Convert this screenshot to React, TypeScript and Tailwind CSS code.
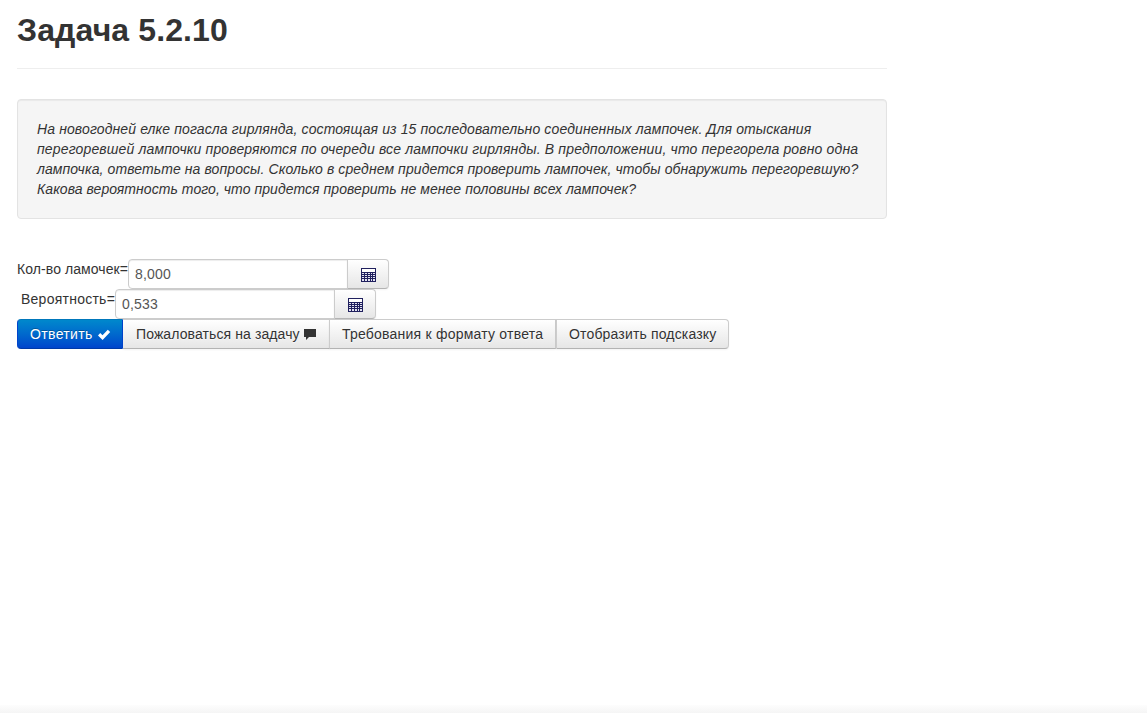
import React from 'react';

const lines = [
  { text: 'На новогодней елке погасла гирлянда, состоящая из 15 последовательно соединенных лампочек. Для отыскания', tracking: 'tracking-[0.118px]' },
  { text: 'перегоревшей лампочки проверяются по очереди все лампочки гирлянды. В предположении, что перегорела ровно одна', tracking: 'tracking-[0.15px]' },
  { text: 'лампочка, ответьте на вопросы. Сколько в среднем придется проверить лампочек, чтобы обнаружить перегоревшую?', tracking: 'tracking-[0.095px]' },
  { text: 'Какова вероятность того, что придется проверить не менее половины всех лампочек?', tracking: 'tracking-[0.06px]' },
];

function CalcIcon() {
  return (
    <svg width="15" height="14" viewBox="0 0 15 14" shapeRendering="crispEdges">
      <rect width="15" height="14" fill="#20205e" />
      <rect x="1" y="1" width="13" height="3" fill="#fff" />
      {[5, 7, 9, 11].map((y) =>
        [1, 4, 7, 10, 12].map((x) => (
          <rect key={`${x}-${y}`} x={x} y={y} width={x === 10 ? 1 : 2} height={y === 11 ? 2 : 1} fill="#e4e4f2" />
        )),
      )}
    </svg>
  );
}

function AnswerRow({ label, value, labelClass }: { label: string; value: string; labelClass: string }) {
  return (
    <div className="flex h-[30px]">
      <label className={`h-5 shrink-0 whitespace-nowrap ${labelClass}`}>{label}</label>
      <input
        defaultValue={value}
        className="h-[30px] w-[220px] rounded-l border border-[#ccc] bg-white px-1.5 py-1 tracking-[0.2px] text-[#555] shadow-[inset_0_1px_1px_rgba(0,0,0,0.075)] outline-none"
      />
      <button className="-ml-px flex h-[30px] w-[42px] items-center justify-center rounded-r border border-[#ccc] border-b-[#b3b3b3] bg-linear-to-b from-white to-[#e6e6e6] pt-px shadow-[inset_0_1px_0_rgba(255,255,255,0.2),0_1px_2px_rgba(0,0,0,0.05)]">
        <CalcIcon />
      </button>
    </div>
  );
}

const plain =
  'flex h-[30px] items-center whitespace-nowrap border border-[#ccc] border-b-[#b3b3b3] bg-linear-to-b from-white to-[#e6e6e6] pl-3 shadow-[inset_0_1px_0_rgba(255,255,255,0.2),0_1px_2px_rgba(0,0,0,0.05)] [text-shadow:0_1px_1px_rgba(255,255,255,0.75)]';

export default function App() {
  return (
    <div className="flex h-[713px] flex-col justify-between bg-white font-['Liberation_Sans',Arial,sans-serif] text-[14px] leading-5 text-[#333]">
      <main className="ml-[17px] w-[870px] pt-[10px]">
        <header className="h-[59px] border-b border-[#eee]">
          <h1 className="text-[32px] leading-10 font-bold tracking-[0.12px] whitespace-nowrap">Задача 5.2.10</h1>
        </header>
        <section className="mt-[30px] h-[120px] rounded border border-[#e3e3e3] bg-[#f5f5f5] p-[19px] italic shadow-[inset_0_1px_1px_rgba(0,0,0,0.05)]">
          {lines.map(({ text, tracking }) => (
            <p key={text} className={`whitespace-nowrap ${tracking}`}>{text}</p>
          ))}
        </section>
        <form className="mt-10" onSubmit={(e) => e.preventDefault()}>
          <AnswerRow label="Кол-во ламочек=" value="8,000" labelClass="w-[111px] tracking-[0.08px]" />
          <AnswerRow label="Вероятность=" value="0,533" labelClass="w-[98px] pl-1 tracking-[0.25px]" />
          <div className="flex">
            <button className="flex h-[30px] w-[106px] items-center rounded-l border border-[#0044cc] border-t-[#0077bb] border-b-[#0039a6] bg-linear-to-b from-[#0088cc] to-[#0044cc] pl-3 whitespace-nowrap text-white [text-shadow:0_-1px_0_rgba(0,0,0,0.25)]">
              <span className="w-[67px] text-left tracking-[0.35px]">Ответить</span>
              <svg className="mt-px" width="14" height="14" viewBox="0 0 14 14">
                <path d="M1 7.4 3.2 5.1 5.5 7.3 10.8 1.8 13.2 4.1 5.6 12Z" fill="#fff" />
              </svg>
            </button>
            <button className={`${plain} w-[207px] border-l-0 pl-[13px]`}>
              <span className="w-[167px] text-left tracking-[0.1px]">Пожаловаться на задачу</span>
              <svg width="14" height="14" viewBox="0 0 14 14">
                <path d="M1 2H13V10H6L3 13V10H1Z" fill="#333" />
              </svg>
            </button>
            <button className={`${plain} -ml-px w-[227px] tracking-[0.22px]`}>Требования к формату ответа</button>
            <button className={`${plain} w-[173px] rounded-r tracking-[0.16px]`}>Отобразить подсказку</button>
          </div>
        </form>
      </main>
      <footer className="h-2 bg-linear-to-b from-[#fdfdfd] to-[#f5f5f5]" />
    </div>
  );
}
